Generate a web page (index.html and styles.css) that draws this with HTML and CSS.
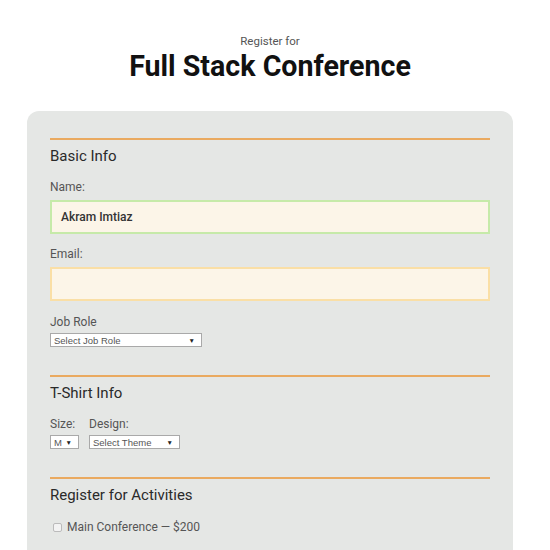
FILE: index.html
```html
<!DOCTYPE html>
<html>
<head>
<meta charset="utf-8">
<link rel="stylesheet" href="styles.css">
</head>
<body>
<div class="page">
  <header class="hero">
    <p class="kicker">Register for</p>
    <h1 class="title">Full Stack Conference</h1>
  </header>
  <form class="card">
    <section class="group">
      <h2 class="legend">Basic Info</h2>
      <label class="label">Name:</label>
      <div class="field field-valid">Akram Imtiaz</div>
      <label class="label label-email">Email:</label>
      <div class="field field-warn"></div>
      <label class="label label-role">Job Role</label>
      <div class="select select-role"><span>Select Job Role</span><span class="caret">▼</span></div>
    </section>
    <section class="group">
      <h2 class="legend">T-Shirt Info</h2>
      <div class="shirt">
        <div class="shirt-col">
          <label class="label">Size:</label>
          <div class="select select-size"><span>M</span><span class="caret">▼</span></div>
        </div>
        <div class="shirt-col">
          <label class="label">Design:</label>
          <div class="select select-design"><span>Select Theme</span><span class="caret">▼</span></div>
        </div>
      </div>
    </section>
    <section class="group">
      <h2 class="legend">Register for Activities</h2>
      <div class="check-row"><span class="box"></span><span class="check-label">Main Conference — $200</span></div>
    </section>
  </form>
</div>
</body>
</html>
```
FILE: styles.css
```css
html, body { margin: 0; padding: 0; background: #fff; }
body { font-family: Roboto, "Noto Sans", sans-serif; color: #222; }
.page { width: 486px; margin: 0 0 0 27px; }
.hero { text-align: center; padding-top: 34px; }
.kicker { margin: 0; font-size: 11.5px; line-height: 14px; color: #555; }
.title { margin: 1px 0 0; font-size: 28.6px; line-height: 34px; font-weight: 700; color: #111; }
.card { margin-top: 28px; background: #e5e7e5; border-radius: 12px; padding: 27px 23px 40px; height: 480px; box-sizing: border-box; }
.group { border-top: 2px solid #eaaa60; padding-top: 6px; margin-bottom: 28px; }
.legend { margin: 0; font-size: 15px; line-height: 20px; font-weight: 400; color: #2a2a2a; }
.label { display: block; margin-top: 13px; font-size: 12px; line-height: 16px; color: #555; }
.label-email { margin-top: 12px; }
.label-role { margin-top: 13px; }
.field { margin-top: 5px; height: 34px; box-sizing: border-box; background: #fcf5e8; border: 2px solid #c6eaa9; padding: 0 9px; font-size: 12px; line-height: 30px; font-weight: 500; color: #333; }
.field-warn { border-color: #fadfa6; }
.select { display: flex; justify-content: space-between; align-items: center; margin-top: 3px; height: 14px; box-sizing: border-box; background: #fff; border: 1px solid #a9a9a9; padding: 0 6px 0 3px; font-family: "Liberation Sans", Arial, sans-serif; font-size: 9.5px; color: #555; }
.caret { font-size: 6.5px; color: #222; }
.select-role { width: 152px; }
.shirt { display: flex; gap: 10px; }
.select-size { width: 29px; }
.select-design { width: 91px; }
.check-row { display: flex; align-items: center; margin-top: 15px; }
.box { width: 7px; height: 7px; border: 1px solid #bbb; border-radius: 2px; background: #f3f3f3; margin-left: 3px; margin-right: 5px; }
.check-label { font-size: 12px; color: #555; }
```
